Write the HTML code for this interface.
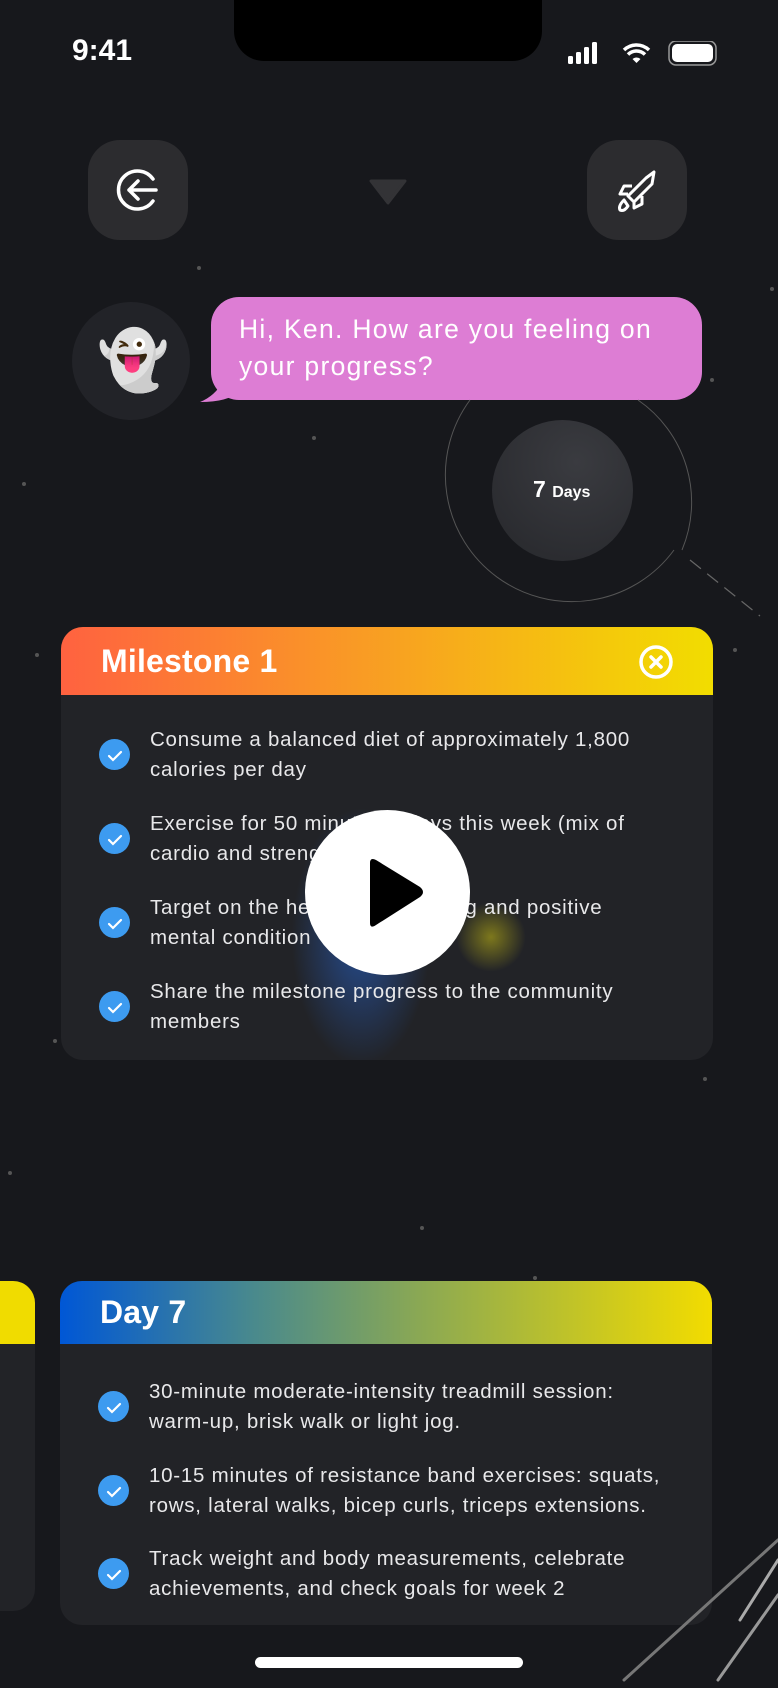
<!DOCTYPE html>
<html><head><meta charset="utf-8">
<style>
*{margin:0;padding:0;box-sizing:border-box}
body{width:778px;height:1688px;background:#17181c;overflow:hidden;position:relative;font-family:"Liberation Sans",sans-serif;color:#fff}
.abs{position:absolute}
.btn{position:absolute;width:100px;height:100px;border-radius:32px;background:#2c2c2f}
.card{position:absolute;background:#222327;border-radius:22px;overflow:hidden}
.hdr{height:68px;position:relative}
.hdr h2{position:absolute;left:40px;top:16px;font-size:32px;font-weight:bold;letter-spacing:0.2px}
.item{position:absolute;left:89px;font-size:20.5px;line-height:30px;color:#e8e8ea;white-space:nowrap;letter-spacing:0.75px}
.chk{position:absolute;left:38px;width:31px;height:31px;border-radius:50%;background:#3d9bf0}
.dot{position:absolute;width:4px;height:4px;border-radius:50%;background:#555}
</style></head><body>
<div class="dot" style="left:197px;top:266px"></div>
<div class="dot" style="left:770px;top:287px"></div>
<div class="dot" style="left:710px;top:378px"></div>
<div class="dot" style="left:312px;top:436px"></div>
<div class="dot" style="left:22px;top:482px"></div>
<div class="dot" style="left:35px;top:653px"></div>
<div class="dot" style="left:733px;top:648px"></div>
<div class="dot" style="left:53px;top:1039px"></div>
<div class="dot" style="left:703px;top:1077px"></div>
<div class="dot" style="left:8px;top:1171px"></div>
<div class="dot" style="left:420px;top:1226px"></div>
<div class="dot" style="left:533px;top:1276px"></div>
<div class="dot" style="left:692px;top:1524px"></div>

<div class="abs" style="left:234px;top:0;width:308px;height:61px;background:#000;border-radius:0 0 30px 30px"></div>
<div class="abs" style="left:72px;top:34px;font-size:30px;font-weight:600">9:41</div>
<svg class="abs" style="left:568px;top:41px" width="150" height="26" viewBox="0 0 150 26">
<rect x="0" y="15" width="5" height="8" rx="1.5" fill="#fff"/><rect x="8" y="11" width="5" height="12" rx="1.5" fill="#fff"/><rect x="16" y="6" width="5" height="17" rx="1.5" fill="#fff"/><rect x="24" y="1" width="5" height="22" rx="1.5" fill="#fff"/>
<path d="M56 9a18 18 0 0 1 25 0" stroke="#fff" stroke-width="3.5" fill="none"/><path d="M60 13.5a12 12 0 0 1 17 0" stroke="#fff" stroke-width="3.5" fill="none"/><path d="M64.5 18l4 4 4-4a6 6 0 0 0-8 0z" fill="#fff"/>
<rect x="101" y="0" width="47" height="24" rx="7" stroke="#999" stroke-width="1.5" fill="none"/><rect x="104" y="3" width="41" height="18" rx="5" fill="#fff"/>
</svg>

<div class="btn" style="left:88px;top:140px"></div>
<svg class="abs" style="left:110px;top:162px" width="56" height="56" viewBox="0 0 56 56" fill="none" stroke="#fff" stroke-width="3.5" stroke-linecap="round" stroke-linejoin="round">
<path d="M43 17A19 19 0 1 0 43 39"/><path d="M46 28H19M28 19l-9 9 9 9"/></svg>
<svg class="abs" style="left:368px;top:178px" width="40" height="30"><path d="M3 3h34l-17 22z" fill="#333336" stroke="#333336" stroke-width="3" stroke-linejoin="round"/></svg>
<div class="btn" style="left:587px;top:140px"></div>
<svg class="abs" style="left:612px;top:164px" width="52" height="52" viewBox="0 0 52 52" fill="none" stroke="#fff" stroke-width="3" stroke-linejoin="round">
<path d="M42 8 L40 20 L22 38 L16 32 L34 14 Z"/><path d="M20 22 L12 22 L8 30 L16 30"/><path d="M30 32 L30 40 L22 44 L22 38"/><path d="M12 36 Q6 42 8 46 Q12 48 16 42 Z"/></svg>

<div class="abs" style="left:72px;top:302px;width:118px;height:118px;border-radius:50%;background:#222328"></div>
<div class="abs" style="left:97px;top:328px;font-size:58px;line-height:66px;font-family:'Noto Color Emoji','DejaVu Sans',sans-serif">👻</div>
<svg class="abs" style="left:198px;top:370px" width="40" height="34"><path d="M30 0 Q22 24 2 32 Q30 32 40 22 Z" fill="#dd7dd4"/></svg>
<div class="abs" style="left:211px;top:297px;width:491px;height:103px;border-radius:28px;background:#dd7dd4;padding:14px 28px;font-size:26.5px;line-height:37px;color:#fff;white-space:nowrap;letter-spacing:1.3px">Hi, Ken. How are you feeling on<br>your progress?</div>

<svg class="abs" style="left:420px;top:360px" width="358" height="300" fill="none">
<path d="M50 40 A124 124 0 1 0 254 190" stroke="#555" stroke-width="1"/>
<path d="M218 40 A124 124 0 0 1 262 190" stroke="#555" stroke-width="1"/>
<path d="M270 200 L340 256" stroke="#666" stroke-width="1.2" stroke-dasharray="14 8"/>
</svg>
<div class="abs" style="left:492px;top:420px;width:141px;height:141px;border-radius:50%;background:radial-gradient(circle at 60% 30%,#3a3b40,#26272b)"></div>
<div class="abs" style="left:533px;top:476px;font-weight:bold;font-size:23px">7 <span style="font-size:16px">Days</span></div>

<div class="card" style="left:61px;top:627px;width:652px;height:433px">
<div class="hdr" style="background:linear-gradient(90deg,#ff6240,#f99a25 45%,#f2dd00)"><h2>Milestone 1</h2>
<svg class="abs" style="left:577px;top:17px" width="36" height="36" fill="none" stroke="#fff" stroke-width="3.5" stroke-linecap="round"><circle cx="18" cy="18" r="15"/><path d="M13 13l10 10M23 13l-10 10"/></svg></div>
<div style="position:absolute;left:230px;top:180px;width:140px;height:260px;border-radius:50%;background:radial-gradient(ellipse,rgba(40,110,230,.55),rgba(40,110,230,0) 70%)"></div>
<div style="position:absolute;left:395px;top:275px;width:70px;height:70px;border-radius:50%;background:radial-gradient(circle,rgba(200,190,20,.55),rgba(200,190,20,0) 70%)"></div>
<div class="chk" style="top:112px"></div><div class="item" style="top:98px">Consume a balanced diet of approximately 1,800<br>calories per day</div>
<div class="chk" style="top:196px"></div><div class="item" style="top:182px">Exercise for 50 minutes 3 days this week (mix of<br>cardio and strength)</div>
<div class="chk" style="top:280px"></div><div class="item" style="top:266px">Target on the health of well-being and positive<br>mental condition</div>
<div class="chk" style="top:364px"></div><div class="item" style="top:350px">Share the milestone progress to the community<br>members</div>
</div>
<svg class="abs" style="left:99px;top:739px" width="32" height="340" fill="none" stroke="#fff" stroke-width="2.2" stroke-linecap="round"><path d="M10 17l4 4 8-8"/><path d="M10 101l4 4 8-8"/><path d="M10 185l4 4 8-8"/><path d="M10 269l4 4 8-8"/></svg>

<div class="abs" style="left:305px;top:810px;width:165px;height:165px;border-radius:50%;background:#fff"></div>
<svg class="abs" style="left:360px;top:855px" width="70" height="76"><path d="M10 8 Q10 2 16 5 L60 32 Q66 37 60 42 L16 70 Q10 74 10 68 Z" fill="#000"/></svg>

<div class="card" style="left:-40px;top:1281px;width:75px;height:330px"><div style="height:63px;background:#f0dc00"></div></div>

<div class="card" style="left:60px;top:1281px;width:652px;height:344px">
<div class="hdr" style="height:63px;background:linear-gradient(90deg,#0057d6,#4a8a8c 30%,#8aa854 55%,#f2dc00)"><h2 style="top:13px">Day 7</h2></div>
<div class="chk" style="top:110px"></div><div class="item" style="top:96px">30-minute moderate-intensity treadmill session:<br>warm-up, brisk walk or light jog.</div>
<div class="chk" style="top:194px"></div><div class="item" style="top:180px">10-15 minutes of resistance band exercises: squats,<br>rows, lateral walks, bicep curls, triceps extensions.</div>
<div class="chk" style="top:277px"></div><div class="item" style="top:263px">Track weight and body measurements, celebrate<br>achievements, and check goals for week 2</div>
</div>
<svg class="abs" style="left:98px;top:1391px" width="32" height="200" fill="none" stroke="#fff" stroke-width="2.2" stroke-linecap="round"><path d="M10 17l4 4 8-8"/><path d="M10 101l4 4 8-8"/><path d="M10 184l4 4 8-8"/></svg>

<svg class="abs" style="left:600px;top:1500px" width="178" height="188" fill="none" stroke-linecap="round">
<path d="M178 40 L24 180" stroke="#777" stroke-width="3"/>
<path d="M178 60 L140 120" stroke="#aaa" stroke-width="3"/>
<path d="M178 95 L118 180" stroke="#999" stroke-width="3"/>
</svg>

<div class="abs" style="left:255px;top:1657px;width:268px;height:11px;border-radius:6px;background:#fff"></div>
</body></html>
